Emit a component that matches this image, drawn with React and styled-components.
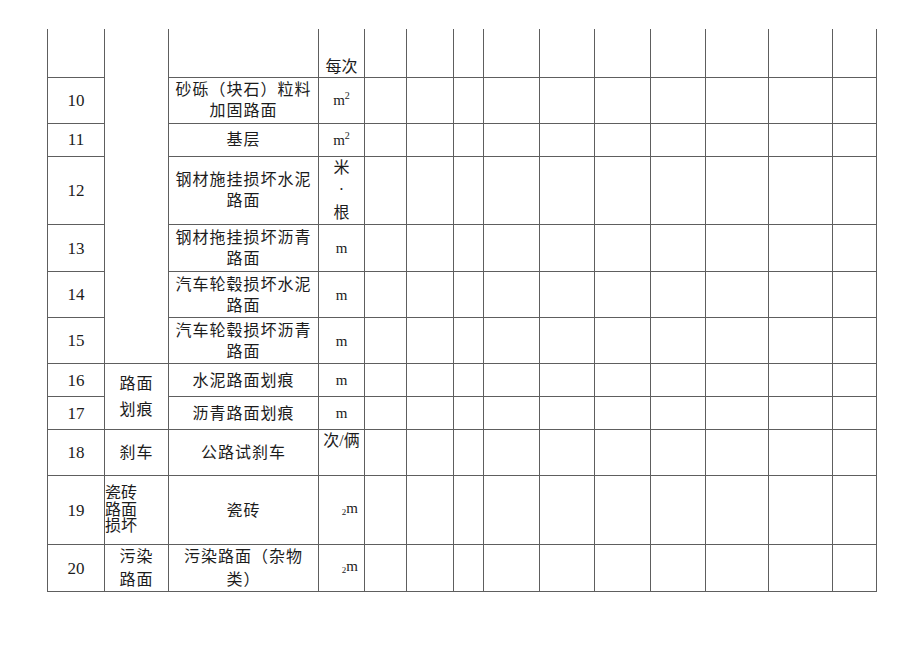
import React from 'react';
import styled, {createGlobalStyle} from 'styled-components';

const GlobalStyle = createGlobalStyle`
	html, body {
		margin: 0;
		padding: 0;
		background: #fff;
	}
`;

const COLS = [57, 64, 150, 46, 42, 47, 30, 56, 55, 56, 55, 63, 64, 44];
const BLANKS = 10;

const Sheet = styled.table`
	border-collapse: collapse;
	table-layout: fixed;
	width: 829px;
	margin: 29px 0 0 47px;

	font-family: 'Liberation Serif', 'Noto Sans CJK SC', serif;
	font-size: 16px;
	color: #1c1c1c;
`;

const Row = styled.tr`
	height: ${({$h}) => $h}px;
`;

const Cell = styled.td`
	border: 1px solid #5e5e5e;
	border-top: ${({$open}) => ($open ? 'none' : '1px solid #5e5e5e')};
	padding: 0;

	text-align: ${({$align}) => $align || 'center'};
	vertical-align: ${({$valign}) => $valign || 'middle'};
	line-height: ${({$lh}) => $lh || 21}px;
	letter-spacing: ${({$ls}) => ($ls === undefined ? 1 : $ls)}px;
	white-space: nowrap;
	overflow: hidden;
`;

const Num = styled.span`
	font-size: 17px;
	letter-spacing: 0;
`;

const Unit = styled.span`
	font-size: 15px;
	letter-spacing: 0;

	sup {
		font-size: 10px;
		vertical-align: 6px;
		line-height: 0;
	}
`;

const SubUnit = styled.span`
	display: block;
	padding-right: 6px;
	text-align: right;
	font-size: 15px;
	letter-spacing: 0;

	small {
		font-size: 9px;
		vertical-align: -2px;
	}
`;

const Lines = ({lines}) =>
	lines.map((l, i) => (
		<React.Fragment key={i}>
			{i > 0 && <br/>}
			{l}
		</React.Fragment>
	));

const squareMetre = (
	<Unit>
		m<sup>2</sup>
	</Unit>
);
const metre = <Unit>m</Unit>;
const reverseMetre = (
	<SubUnit>
		<small>2</small>m
	</SubUnit>
);

const rows = [
	{
		h: 48,
		no: '',
		open: true,
		cat: {span: 7, lines: []},
		item: [],
		unit: '每次',
		unitV: 'bottom',
		unitLs: 0,
	},
	{h: 46, no: '10', item: ['砂砾（块石）粒料', '加固路面'], unit: squareMetre},
	{h: 33, no: '11', item: ['基层'], unit: squareMetre},
	{
		h: 68,
		no: '12',
		item: ['钢材施挂损坏水泥', '路面'],
		unit: <Lines lines={['米', '·', '根']}/>,
		unitLh: 22.5,
		unitLs: 0,
	},
	{h: 47, no: '13', item: ['钢材拖挂损坏沥青', '路面'], unit: metre},
	{h: 46, no: '14', item: ['汽车轮毂损坏水泥', '路面'], unit: metre},
	{h: 46, no: '15', item: ['汽车轮毂损坏沥青', '路面'], unit: metre},
	{
		h: 33,
		no: '16',
		cat: {span: 2, lines: ['路面', '划痕'], lh: 26},
		item: ['水泥路面划痕'],
		unit: metre,
	},
	{h: 33, no: '17', item: ['沥青路面划痕'], unit: metre},
	{
		h: 46,
		no: '18',
		cat: {lines: ['刹车']},
		item: ['公路试刹车'],
		unit: '次/俩',
		unitV: 'top',
		unitLs: 0,
	},
	{
		h: 69,
		no: '19',
		cat: {lines: ['瓷砖', '路面', '损坏'], align: 'left', lh: 16.5, ls: 0},
		item: ['瓷砖'],
		unit: reverseMetre,
	},
	{
		h: 47,
		no: '20',
		cat: {lines: ['污染', '路面'], lh: 23},
		item: ['污染路面（杂物', '类）'],
		itemLh: 23,
		unit: reverseMetre,
	},
];

const App = () => (
	<>
		<GlobalStyle/>
		<Sheet>
			<colgroup>
				{COLS.map((w, i) => (
					<col key={i} style={{width: w}}/>
				))}
			</colgroup>
			<tbody>
				{rows.map((r, ri) => (
					<Row key={ri} $h={r.h}>
						<Cell $open={r.open}>
							<Num>{r.no}</Num>
						</Cell>
						{r.cat && (
							<Cell
								$open={r.open}
								rowSpan={r.cat.span || 1}
								$align={r.cat.align}
								$lh={r.cat.lh}
								$ls={r.cat.ls}
							>
								<Lines lines={r.cat.lines}/>
							</Cell>
						)}
						<Cell $open={r.open} $lh={r.itemLh}>
							<Lines lines={r.item}/>
						</Cell>
						<Cell
							$open={r.open}
							$valign={r.unitV}
							$lh={r.unitLh}
							$ls={r.unitLs}
						>
							{r.unit}
						</Cell>
						{Array.from({length: BLANKS}).map((_, i) => (
							<Cell key={i} $open={r.open}/>
						))}
					</Row>
				))}
			</tbody>
		</Sheet>
	</>
);

export default App;
